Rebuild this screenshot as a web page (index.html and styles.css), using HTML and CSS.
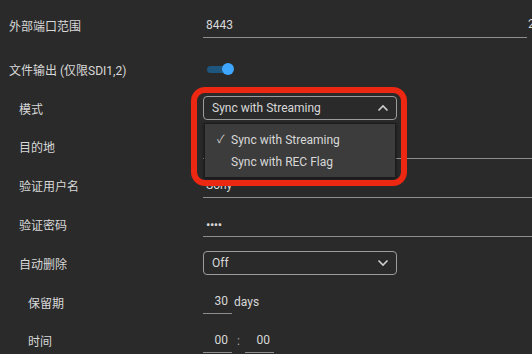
FILE: index.html
```html
<!DOCTYPE html>
<html lang="zh-CN">
<head>
<meta charset="UTF-8">
<title>文件输出设置</title>
<link rel="stylesheet" href="styles.css">
</head>
<body>
<div class="form">
	<div class="row first">
		<div class="label">外部端口范围</div>
		<div class="field">
			<span class="line port">8443</span>
			<span class="line port2">2</span>
		</div>
	</div>
	<div class="row second">
		<div class="label">文件输出 (仅限SDI1,2)</div>
		<div class="field">
			<span class="toggle"><span class="knob"></span></span>
		</div>
	</div>
	<div class="row">
		<div class="label sub">模式</div>
		<div class="field">
			<div class="select open">
				<span>Sync with Streaming</span>
				<svg class="chev" width="12" height="8" viewBox="0 0 12 8"><path d="M1.5 6.5 L6 2 L10.5 6.5" fill="none" stroke="#cfcfcf" stroke-width="1.6"/></svg>
				<div class="menu">
					<div class="item"><span class="check">&#10003;</span>Sync with Streaming</div>
					<div class="item">Sync with REC Flag</div>
				</div>
			</div>
		</div>
	</div>
	<div class="row">
		<div class="label sub">目的地</div>
		<div class="field"><span class="line wide"></span></div>
	</div>
	<div class="row">
		<div class="label sub">验证用户名</div>
		<div class="field"><span class="line wide">Sony</span></div>
	</div>
	<div class="row">
		<div class="label sub">验证密码</div>
		<div class="field"><span class="line wide pass">&bull;&bull;&bull;&bull;</span></div>
	</div>
	<div class="row">
		<div class="label sub">自动删除</div>
		<div class="field">
			<div class="select">
				<span>Off</span>
				<svg class="chev" width="12" height="8" viewBox="0 0 12 8"><path d="M1.5 1.5 L6 6 L10.5 1.5" fill="none" stroke="#cfcfcf" stroke-width="1.6"/></svg>
			</div>
		</div>
	</div>
	<div class="row">
		<div class="label subsub">保留期</div>
		<div class="field">
			<span class="line num">30</span><span class="unit">days</span>
		</div>
	</div>
	<div class="row">
		<div class="label subsub">时间</div>
		<div class="field">
			<span class="line num">00</span><span class="colon">:</span><span class="line num">00</span>
		</div>
	</div>
</div>
<div class="highlight"></div>
</body>
</html>
```
FILE: styles.css
```css
html, body {
	margin: 0;
	background: #2a2a2a;
	overflow: hidden;
}
body {
	font-family: Roboto, "Noto Sans CJK SC", sans-serif;
	font-size: 12px;
	color: #d8d8d8;
	width: 532px;
	height: 354px;
	position: relative;
}
.form {
	padding-top: 6px;
}
.row {
	display: flex;
	align-items: center;
	height: 38.8px;
	white-space: nowrap;
}
.row.first {
	height: 39px;
}
.row.second {
	margin-top: 5px;
}
.label {
	width: 203px;
	flex: none;
	padding-left: 9px;
	box-sizing: border-box;
}
.label.sub {
	padding-left: 19px;
}
.label.subsub {
	padding-left: 28px;
}
.field {
	display: flex;
	align-items: center;
	flex: none;
	position: relative;
}
.line {
	display: inline-block;
	box-sizing: border-box;
	height: 24px;
	line-height: 23px;
	padding-left: 3px;
	border-bottom: 1px solid #8e8e8e;
	color: #d8d8d8;
}
.line.port {
	width: 324px;
}
.line.port2 {
	width: 60px;
	margin-left: 1px;
	border-bottom: none;
	padding-left: 0;
	line-height: 20px;
}
.line.wide {
	width: 340px;
}
.line.pass {
	font-size: 13px;
	letter-spacing: -0.5px;
}
.line.num {
	width: 29px;
	padding-left: 0;
	padding-right: 4px;
	text-align: right;
}
.unit {
	margin-left: 2px;
}
.colon {
	width: 13px;
	text-align: center;
	color: #aaaaaa;
}
.toggle {
	display: block;
	position: relative;
	width: 21px;
	height: 7px;
	margin-left: 4px;
	border-radius: 4px;
	background: #1f5680;
}
.knob {
	position: absolute;
	right: -6px;
	top: -2.5px;
	width: 12px;
	height: 12px;
	border-radius: 50%;
	background: #3ea6ff;
}
.select {
	position: relative;
	display: flex;
	align-items: center;
	justify-content: space-between;
	box-sizing: border-box;
	width: 194px;
	height: 24px;
	padding: 0 7px 0 8px;
	border: 1px solid #9c9c9c;
	border-radius: 4px;
}
.chev {
	display: block;
}
.menu {
	position: absolute;
	left: 0;
	top: 26px;
	width: 192px;
	height: 55px;
	box-sizing: border-box;
	padding-top: 5px;
	background: #3c3c3c;
	border: 1px solid #1c1c1c;
	box-shadow: 0 1px 3px rgba(0, 0, 0, 0.6);
	z-index: 2;
}
.item {
	height: 22px;
	line-height: 22px;
	padding-left: 26px;
	position: relative;
	color: #d8d8d8;
}
.check {
	position: absolute;
	left: 12px;
	font-size: 11px;
	color: #cfcfcf;
}
.highlight {
	position: absolute;
	left: 191px;
	top: 87px;
	width: 216px;
	height: 99px;
	box-sizing: border-box;
	border: 6.5px solid #ec2712;
	border-radius: 14px;
	z-index: 3;
}
```
